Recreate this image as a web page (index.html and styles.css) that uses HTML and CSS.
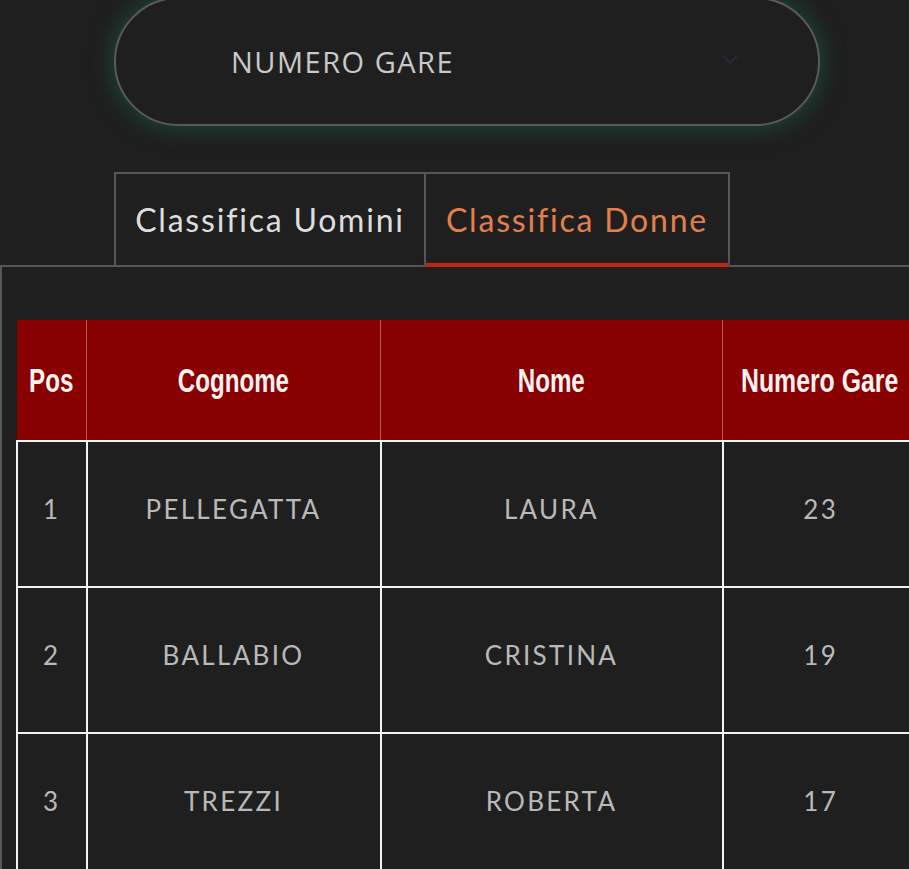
FILE: index.html
```html
<!DOCTYPE html>
<html lang="it">
<head>
<meta charset="utf-8">
<title>Classifica</title>
<link rel="stylesheet" href="styles.css">
</head>
<body>
<div class="page">
  <div class="select-row">
    <div class="select">
      <span class="select-label">NUMERO GARE</span>
      <svg class="chevron" width="16" height="10" viewBox="0 0 16 10"><path d="M1 1 L8 8 L15 1" fill="none" stroke="#262633" stroke-width="3"/></svg>
    </div>
  </div>
  <div class="tabs">
    <div class="tab">Classifica Uomini</div>
    <div class="tab active">Classifica Donne</div>
  </div>
  <div class="panel">
    <table class="ranking">
      <thead>
        <tr><th class="c-pos"><span>Pos</span></th><th class="c-cog"><span>Cognome</span></th><th class="c-nom"><span>Nome</span></th><th class="c-num"><span>Numero Gare</span></th></tr>
      </thead>
      <tbody>
        <tr><td>1</td><td>PELLEGATTA</td><td>LAURA</td><td>23</td></tr>
        <tr><td>2</td><td>BALLABIO</td><td>CRISTINA</td><td>19</td></tr>
        <tr><td>3</td><td>TREZZI</td><td>ROBERTA</td><td>17</td></tr>
      </tbody>
    </table>
  </div>
</div>
</body>
</html>
```
FILE: styles.css
```css
html, body {
  margin: 0;
  padding: 0;
  background: #1f1f1f;
  overflow: hidden;
}
.page {
  width: 909px;
  height: 869px;
  overflow: hidden;
}
.select-row {
  padding-left: 114px;
  margin-top: -3px;
}
.select {
  box-sizing: border-box;
  width: 706px;
  height: 129px;
  border: 2px solid #5a5a5a;
  border-radius: 65px;
  background: #1f1f1f;
  box-shadow: 0 0 20px 4px rgba(25, 95, 75, 0.55);
  display: flex;
  align-items: center;
  padding-left: 115px;
  padding-right: 80px;
  justify-content: space-between;
}
.select-label {
  font-family: "Open Sans", "Noto Sans", sans-serif;
  font-size: 29px;
  color: #c9c9c9;
  letter-spacing: 1.5px;
  margin-top: -1px;
}
.chevron {
  margin-top: -4px;
}
.tabs {
  display: flex;
  padding-left: 114px;
  margin-top: 46px;
}
.tab {
  box-sizing: border-box;
  height: 93px;
  border: 2px solid #565656;
  border-bottom: none;
  display: flex;
  align-items: center;
  justify-content: center;
  font-family: "Lato", "DejaVu Sans", sans-serif;
  font-size: 32px;
  letter-spacing: 1.8px;
  color: #dedede;
}
.tab:first-child {
  width: 312px;
}
.tab.active {
  width: 304px;
  border-left: none;
  color: #e47f4c;
  position: relative;
}
.tab.active::after {
  content: "";
  position: absolute;
  left: 0;
  right: 0;
  bottom: -2px;
  height: 4px;
  background: #b22d17;
  box-shadow: 0 0 3px rgba(120, 20, 10, 0.7);
}
.panel {
  border-top: 2px solid #565656;
  border-left: 2px solid #565656;
  padding: 53px 0 0 14px;
}
.ranking {
  border-collapse: collapse;
  table-layout: fixed;
  width: 920px;
}
.ranking th {
  background: #880000;
  height: 120px;
  padding: 0;
  font-family: "Liberation Sans", "Arial", sans-serif;
  font-weight: bold;
  font-size: 34px;
  color: #fff2f2;
  border-left: 1px solid #b85a5a;
  text-align: center;
  white-space: nowrap;
}
.ranking th span {
  display: inline-block;
  transform: scaleX(0.71);
  transform-origin: center;
}
.ranking th.c-num {
  text-align: left;
  padding-left: 18px;
}
.ranking th.c-num span {
  transform: scaleX(0.73);
  transform-origin: left center;
}
.ranking th:first-child {
  border-left: none;
}
.c-pos { width: 69px; }
.c-cog { width: 293px; }
.c-nom { width: 341px; }
.c-num { width: 196px; }
.ranking td {
  height: 134px;
  padding: 0 0 10px;
  border: 2px solid #f2f2f2;
  text-align: center;
  font-family: "Lato", "DejaVu Sans", sans-serif;
  font-size: 26px;
  color: #b9b9b9;
  letter-spacing: 2.3px;
}
.ranking td:last-child {
  border-right: none;
  padding-right: 19px;
}
```
